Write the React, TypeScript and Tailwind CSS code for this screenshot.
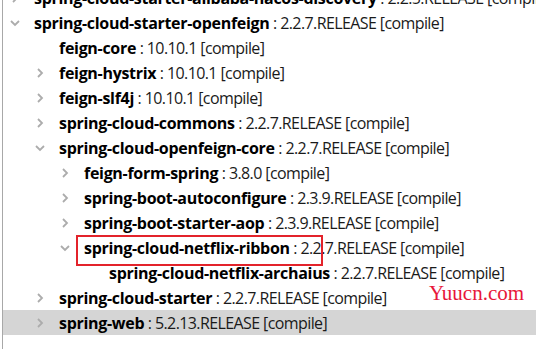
const rows = [
  { level: 0, name: "spring-cloud-starter-alibaba-nacos-discovery", ver: "2.2.5.RELEASE", toggle: "closed" },
  { level: 0, name: "spring-cloud-starter-openfeign", ver: "2.2.7.RELEASE", toggle: "open" },
  { level: 1, name: "feign-core", ver: "10.10.1", toggle: "none" },
  { level: 1, name: "feign-hystrix", ver: "10.10.1", toggle: "closed" },
  { level: 1, name: "feign-slf4j", ver: "10.10.1", toggle: "closed" },
  { level: 1, name: "spring-cloud-commons", ver: "2.2.7.RELEASE", toggle: "closed" },
  { level: 1, name: "spring-cloud-openfeign-core", ver: "2.2.7.RELEASE", toggle: "open" },
  { level: 2, name: "feign-form-spring", ver: "3.8.0", toggle: "closed" },
  { level: 2, name: "spring-boot-autoconfigure", ver: "2.3.9.RELEASE", toggle: "closed" },
  { level: 2, name: "spring-boot-starter-aop", ver: "2.3.9.RELEASE", toggle: "closed" },
  { level: 2, name: "spring-cloud-netflix-ribbon", ver: "2.2.7.RELEASE", toggle: "open", boxed: true },
  { level: 3, name: "spring-cloud-netflix-archaius", ver: "2.2.7.RELEASE", toggle: "none" },
  { level: 1, name: "spring-cloud-starter", ver: "2.2.7.RELEASE", toggle: "closed" },
  { level: 1, name: "spring-web", ver: "5.2.13.RELEASE", toggle: "closed", selected: true },
];

const Chevron = ({ open }: { open: boolean }) => (
  <svg width="10" height="10" viewBox="0 0 10 10" className="shrink-0">
    {open ? (
      <path d="M1 3 L5 7 L9 3" fill="none" stroke="#acacac" strokeWidth="1.8" />
    ) : (
      <path d="M3 1 L7 5 L3 9" fill="none" stroke="#acacac" strokeWidth="1.8" />
    )}
  </svg>
);

export default function App() {
  return (
    <div className="w-[536px] h-[349px] overflow-hidden bg-white pl-[2px]" style={{ fontFamily: '"Open Sans", sans-serif' }}>
      <div className="relative flex flex-col h-full border-l border-[#a8a8a8]">
        <div className="-mt-[15px]">
          {rows.map((r, i) => (
            <div
              key={i}
              className={`relative flex items-center h-[25px] whitespace-nowrap text-[16px] ${r.selected ? "bg-[#d5d5d5]" : ""}`}
            >
              <div style={{ width: 7 + r.level * 25 }} className="shrink-0" />
              <div className="w-[24px] shrink-0 flex items-center">
                {r.toggle !== "none" && <Chevron open={r.toggle === "open"} />}
              </div>
              <span className="font-bold text-black tracking-[-0.3px]">{r.name}</span>
              <span className="text-[#1a1a1a] tracking-[-0.6px]">&nbsp;: {r.ver} [compile]</span>
              {r.boxed && (
                <div className="absolute left-[73px] top-0 w-[247px] h-[31px] border-2 border-[#e3232b]" />
              )}
            </div>
          ))}
        </div>
        <div
          className="absolute left-[426px] top-[283px] text-[21px] leading-none text-[#e8173a]"
          style={{ fontFamily: '"Liberation Serif", serif' }}
        >
          Yuucn.com
        </div>
      </div>
    </div>
  );
}
